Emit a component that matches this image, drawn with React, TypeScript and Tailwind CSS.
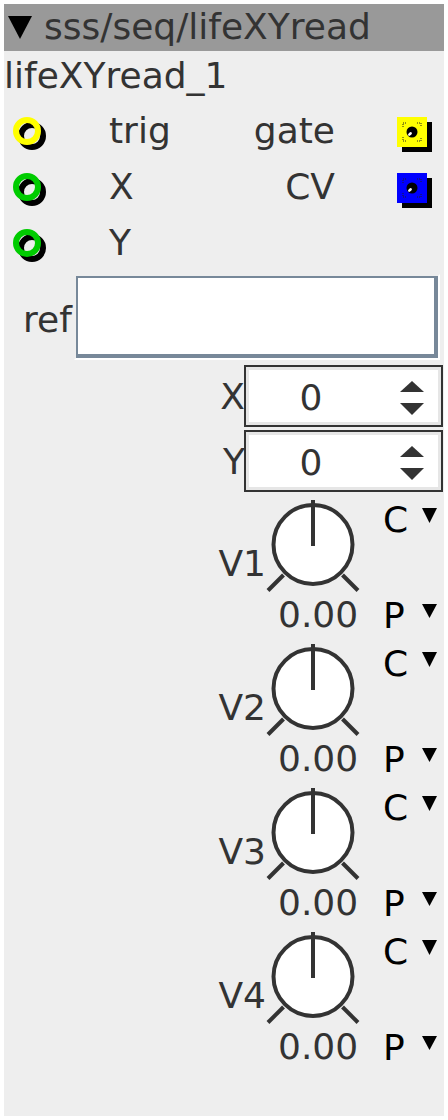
import React from "react";

function RingPort({ color }: { color: string }) {
  return (
    <svg width="36" height="36" viewBox="0 0 36 36">
      <circle cx="19" cy="19" r="11" fill="none" stroke="#000" strokeWidth="6" />
      <circle cx="14" cy="14" r="11" fill="none" stroke={color} strokeWidth="6" />
    </svg>
  );
}

function SquarePort({ color }: { color: string }) {
  const c = "#222";
  return (
    <svg width="36" height="36" viewBox="0 0 36 36">
      <rect x="5" y="5" width="30" height="30" fill="#000" />
      <rect x="0" y="0" width="30" height="30" fill={color} />
      <g stroke={c} strokeWidth="1" fill="none" strokeDasharray="1 1">
        <path d="M6 10 V6 H10" />
        <path d="M20 6 H24 V10" />
        <path d="M6 20 V24 H10" />
        <path d="M20 24 H24 V20" />
      </g>
      <circle cx="15" cy="15" r="5.5" fill="#000" />
      <ellipse cx="13" cy="17" rx="2.2" ry="1.4" fill="#fff" transform="rotate(-40 13 17)" />
    </svg>
  );
}

function Tri({ w, h }: { w: number; h: number }) {
  return (
    <svg width={w} height={h} viewBox={`0 0 ${w} ${h}`}>
      <polygon points={`0,0 ${w},0 ${w / 2},${h}`} fill="#000" />
    </svg>
  );
}

function PortRow({
  left,
  right,
  leftColor,
  rightColor,
}: {
  left: string;
  right?: string;
  leftColor: string;
  rightColor?: string;
}) {
  return (
    <div className="flex h-[56px] leading-[56px]">
      <div className="w-[105px] pl-[9px] pt-[14px] shrink-0">
        <RingPort color={leftColor} />
      </div>
      <span className="flex-1">{left}</span>
      <span className="text-right">{right ?? ""}</span>
      <div className="w-[62px] shrink-0" />
      <div className="w-[36px] pt-[14px] shrink-0">
        {rightColor ? <SquarePort color={rightColor} /> : null}
      </div>
      <div className="w-[11px] shrink-0" />
    </div>
  );
}

function SpinBox({ label }: { label: string }) {
  return (
    <div className="flex justify-end items-center">
      <span className="leading-[35px] mr-[-1px]">{label}</span>
      <div className="w-[199px] h-[62px] border-2 border-[#333333] mr-[1px] shrink-0">
        <div className="w-full h-full border-[3px] border-[#e6e6e6] bg-white flex items-center">
          <div className="w-[124px] text-center leading-[35px] pt-[3px]">0</div>
          <svg width="30" height="52" viewBox="0 0 30 52" className="ml-[24px]">
            <polygon points="3,22 27,22 15,11" fill="#333333" />
            <polygon points="3,33 27,33 15,45" fill="#333333" />
          </svg>
        </div>
      </div>
    </div>
  );
}

function Knob({ label }: { label: string }) {
  return (
    <div className="flex justify-end h-[144px]">
      <div className="pt-[51px] leading-[35px]">{label}</div>
      <div className="w-[96px] shrink-0 flex flex-col">
        <svg width="96" height="102" viewBox="0 0 96 102">
          <circle cx="47" cy="49.5" r="39.5" fill="#fff" stroke="#333333" strokeWidth="4" />
          <line x1="47" y1="5" x2="47" y2="51" stroke="#333333" strokeWidth="4" />
          <line x1="17.5" y1="80" x2="2" y2="95.5" stroke="#333333" strokeWidth="4" />
          <line x1="76.5" y1="80" x2="92" y2="95.5" stroke="#333333" strokeWidth="4" />
        </svg>
        <div className="pl-[12px] leading-[35px] whitespace-nowrap">0.00</div>
      </div>
      <div className="w-[82px] shrink-0 flex flex-col text-black">
        <div className="flex items-start mt-[7px] pl-[21px] h-[35px] leading-[35px]">
          <span className="w-[39px]">C</span>
          <div className="mt-[6px]">
            <Tri w={15} h={15} />
          </div>
        </div>
        <div className="flex items-start mt-[61px] pl-[21px] h-[35px] leading-[35px]">
          <span className="w-[39px]">P</span>
          <div className="mt-[6px]">
            <Tri w={15} h={14} />
          </div>
        </div>
      </div>
    </div>
  );
}

export default function App() {
  return (
    <div className="w-[448px] h-[1120px] bg-white pt-[4px] pl-[4px] font-['DejaVu_Sans',sans-serif]">
      <div className="w-[440px] h-[1112px] bg-[#eeeeee] text-[36px] text-[#333333] overflow-hidden">
        <div className="h-[47px] bg-[#999999] flex items-start">
          <div className="ml-[4px] mt-[12px]">
            <svg width="24" height="23" viewBox="0 0 24 23">
              <polygon points="0,0 24,0 12,23" fill="#000" />
            </svg>
          </div>
          <div className="ml-[12px] leading-[45px] whitespace-nowrap">sss/seq/lifeXYread</div>
        </div>
        <div className="h-[50px] leading-[49px]">lifeXYread_1</div>
        <div className="mt-[2px]">
          <PortRow left="trig" right="gate" leftColor="#ffff00" rightColor="#ffff00" />
          <PortRow left="X" right="CV" leftColor="#00cc00" rightColor="#0000ff" />
          <PortRow left="Y" leftColor="#00cc00" />
        </div>
        <div className="flex mt-[3px] pl-[19px]">
          <div className="w-[51px] pt-[28px] leading-[35px] shrink-0">ref</div>
          <div className="w-[366px] h-[86px] border-2 border-t-[#eeeeee] border-l-[#eeeeee] border-b-white border-r-white shrink-0">
            <div className="w-full h-full bg-white border-t-2 border-l-2 border-b-4 border-r-4 border-[#778899]" />
          </div>
        </div>
        <div className="mt-[5px] flex flex-col gap-[3px]">
          <SpinBox label="X" />
          <SpinBox label="Y" />
        </div>
        <div className="mt-[3px]">
          <Knob label="V1" />
          <Knob label="V2" />
          <Knob label="V3" />
          <Knob label="V4" />
        </div>
      </div>
    </div>
  );
}
